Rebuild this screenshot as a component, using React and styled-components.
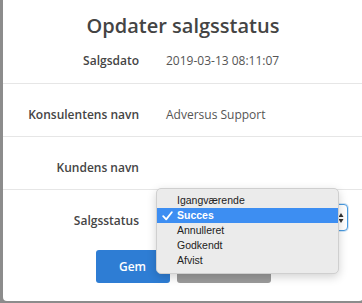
import React from "react";
import styled, { createGlobalStyle } from "styled-components";

const GlobalStyle = createGlobalStyle`
  html, body {
    margin: 0;
    padding: 0;
    background: #8c8c8c;
    overflow: hidden;
  }
  body {
    font-family: "Open Sans", "Liberation Sans", sans-serif;
  }
`;

const Modal = styled.div`
  width: 360px;
  height: 301px;
  margin-left: 3px;
  background: #fff;
  border-radius: 0 0 4px 4px;
  box-sizing: border-box;
`;

const Title = styled.h1`
  margin: 0;
  padding-top: 14px;
  line-height: 24px;
  font-size: 20px;
  font-weight: 600;
  color: #444;
  text-align: center;
`;

const Row = styled.div`
  display: grid;
  grid-template-columns: 136px 182px;
  column-gap: 27px;
  padding: ${(p) => p.$pad || "23px 0 13px"};
  border-bottom: ${(p) => (p.$last ? "none" : "1px solid #e6e6e6")};
`;

const Label = styled.div`
  text-align: right;
  font-size: 12px;
  line-height: 16px;
  font-weight: 600;
  color: #454545;
  margin-top: ${(p) => p.$offset || 0}px;
`;

const Value = styled.div`
  font-size: 12px;
  line-height: 16px;
  color: #555;
`;

const SelectWrap = styled.div`
  position: relative;
  height: 27px;
`;

const SelectBox = styled.div`
  height: 27px;
  box-sizing: border-box;
  border: 1px solid #4a9be0;
  border-radius: 4px;
  box-shadow: 0 0 0 1px rgba(74, 155, 224, 0.25);
  background: #fff;
  display: flex;
  align-items: center;
  justify-content: flex-end;
  padding-right: 3px;
`;

const Menu = styled.div`
  position: absolute;
  left: -10px;
  top: -16px;
  width: 183px;
  box-sizing: border-box;
  padding: 4px 0 5px;
  background: #ebebeb;
  border: 1px solid #cfcfcf;
  border-radius: 5px;
  box-shadow: 0 3px 10px rgba(0, 0, 0, 0.18);
  font-family: "Liberation Sans", Arial, sans-serif;
`;

const Item = styled.div`
  position: relative;
  height: 15px;
  line-height: 15px;
  padding-left: 20px;
  font-size: 10.5px;
  color: ${(p) => (p.$active ? "#fff" : "#222")};
  background: ${(p) => (p.$active ? "#3d8ef2" : "transparent")};
  font-weight: ${(p) => (p.$active ? 700 : 400)};
`;

const Check = styled.svg`
  position: absolute;
  left: 5px;
  top: 3px;
`;

const Buttons = styled.div`
  display: flex;
  justify-content: center;
  gap: 7px;
  padding-top: 19px;
`;

const Button = styled.button`
  width: ${(p) => p.$w}px;
  height: 33px;
  border: none;
  border-radius: 3px;
  background: ${(p) => (p.$primary ? "#2e7dd4" : "#9b9b9b")};
  color: #fff;
  font-family: "Open Sans", "Liberation Sans", sans-serif;
  font-size: 12px;
  font-weight: 600;
  padding: 0;
`;

const options = ["Igangværende", "Succes", "Annulleret", "Godkendt", "Afvist"];

export default function App() {
  return (
    <>
      <GlobalStyle />
      <Modal>
        <Title>Opdater salgsstatus</Title>
        <Row $pad="15px 0 14px">
          <Label>Salgsdato</Label>
          <Value>2019-03-13 08:11:07</Value>
        </Row>
        <Row>
          <Label>Konsulentens navn</Label>
          <Value>Adversus Support</Value>
        </Row>
        <Row>
          <Label>Kundens navn</Label>
          <Value />
        </Row>
        <Row $pad="14px 0 0" $last>
          <Label $offset={9}>Salgsstatus</Label>
          <SelectWrap>
            <SelectBox>
              <svg width="6" height="12" viewBox="0 0 6 12">
                <path d="M3 1 L5.5 5 L0.5 5 Z" fill="#333" />
                <path d="M3 11 L5.5 7 L0.5 7 Z" fill="#333" />
              </svg>
            </SelectBox>
            <Menu>
              {options.map((o) => (
                <Item key={o} $active={o === "Succes"}>
                  {o === "Succes" && (
                    <Check width="11" height="10" viewBox="0 0 11 10">
                      <path
                        d="M1.2 5.2 L4.2 8.4 L9.8 1.2"
                        fill="none"
                        stroke="#fff"
                        strokeWidth="1.8"
                        strokeLinecap="round"
                        strokeLinejoin="round"
                      />
                    </Check>
                  )}
                  {o}
                </Item>
              ))}
            </Menu>
          </SelectWrap>
        </Row>
        <Buttons>
          <Button $primary $w={74}>Gem</Button>
          <Button $w={94}>Annuller</Button>
        </Buttons>
      </Modal>
    </>
  );
}
